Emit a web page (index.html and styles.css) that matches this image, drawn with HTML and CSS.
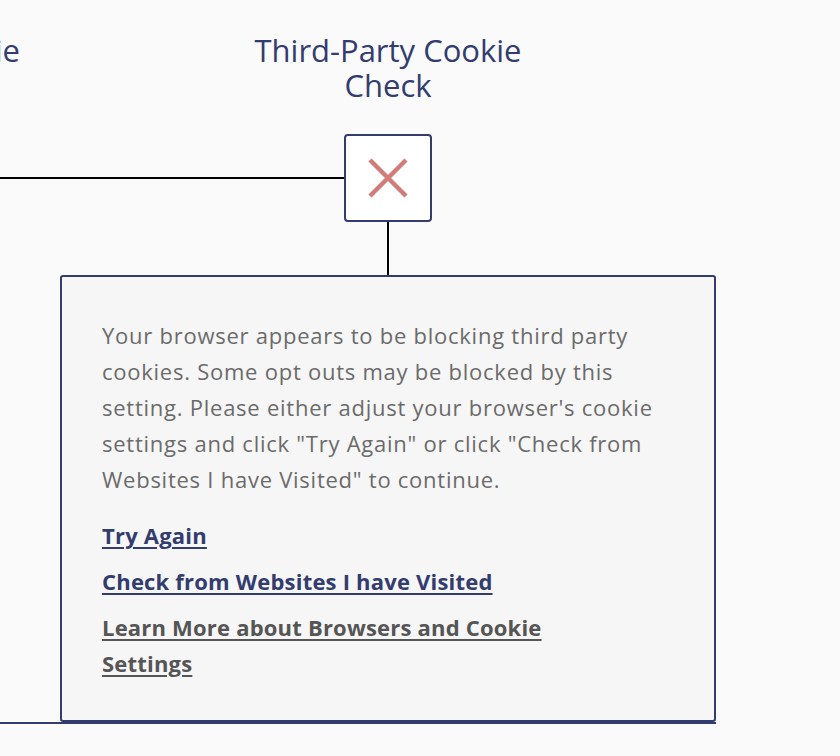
FILE: index.html
```html
<!DOCTYPE html>
<html lang="en">
<head>
<meta charset="utf-8">
<title>Third-Party Cookie Check</title>
<link rel="stylesheet" href="styles.css">
</head>
<body>
<div class="prev-title">First-Party Cookie</div>
<main class="stage">
  <h2 class="step-title">Third-Party Cookie<br>Check</h2>
  <div class="node-row">
    <div class="connector-h"></div>
    <div class="node">
      <svg class="node-icon" width="40" height="40" viewBox="0 0 40 40" aria-hidden="true">
        <path d="M2 2 L38 38 M38 2 L2 38" />
      </svg>
    </div>
    <div class="node-spacer"></div>
  </div>
  <div class="connector-v"></div>
  <section class="panel">
    <p class="panel-text">Your browser appears to be blocking third party cookies. Some opt outs may be blocked by this setting. Please either adjust your browser's cookie settings and click "Try Again" or click "Check from Websites I have Visited" to continue.</p>
    <ul class="panel-links">
      <li><a href="#" class="link link-primary">Try Again</a></li>
      <li><a href="#" class="link link-primary">Check from Websites I have Visited</a></li>
      <li><a href="#" class="link link-muted">Learn More about Browsers and Cookie Settings</a></li>
    </ul>
  </section>
  <div class="baseline-rule"></div>
</main>
</body>
</html>
```
FILE: styles.css
```css
html, body {
  margin: 0;
  padding: 0;
}
body {
  position: relative;
  width: 840px;
  height: 756px;
  overflow: hidden;
  background: #fafafa;
  font-family: "Open Sans", "Noto Sans", sans-serif;
}
.prev-title {
  position: absolute;
  right: 820px;
  top: 33px;
  white-space: nowrap;
  font-size: 31px;
  line-height: 35px;
  color: #333c6f;
}
.stage {
  width: 776px;
  display: flex;
  flex-direction: column;
  align-items: center;
  padding-top: 33px;
}
.step-title {
  margin: 0 0 31px;
  font-size: 31px;
  line-height: 35px;
  font-weight: 400;
  text-align: center;
  color: #333c6f;
}
.node-row {
  align-self: stretch;
  display: flex;
  align-items: center;
}
.connector-h {
  flex: 1;
  height: 2px;
  background: #000;
}
.node-spacer {
  flex: 1;
}
.node {
  box-sizing: border-box;
  width: 88px;
  height: 88px;
  border: 2px solid #333c6f;
  border-radius: 4px;
  background: #fff;
  display: flex;
  align-items: center;
  justify-content: center;
}
.node-icon path {
  stroke: #d17c78;
  stroke-width: 4.5;
  fill: none;
}
.connector-v {
  width: 2px;
  height: 53px;
  background: #000;
}
.panel {
  box-sizing: border-box;
  width: 656px;
  height: 447px;
  border: 2px solid #333c6f;
  border-radius: 3px;
  background: #f6f6f6;
  padding: 40px 40px 0;
}
.panel-text {
  margin: 0 0 20px;
  font-size: 22px;
  line-height: 36px;
  letter-spacing: 0.75px;
  color: #6b6b6b;
}
.panel-links {
  list-style: none;
  margin: 0;
  padding: 0;
  max-width: 490px;
  display: flex;
  flex-direction: column;
  gap: 10px;
}
.link {
  font-size: 22px;
  line-height: 36px;
  font-weight: 700;
  letter-spacing: 0.2px;
  text-decoration: underline;
  text-decoration-thickness: 2px;
  text-underline-offset: 3px;
}
.link-primary {
  color: #333c6f;
}
.link-muted {
  color: #555;
}
.baseline-rule {
  align-self: flex-start;
  width: 716px;
  height: 2px;
  background: #333c6f;
}
```
